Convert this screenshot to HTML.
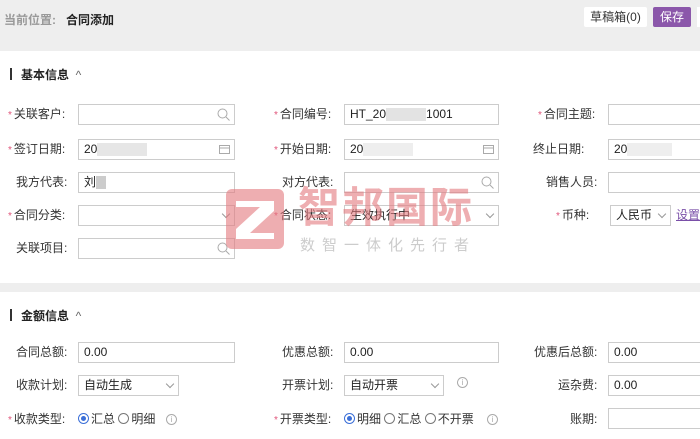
<!DOCTYPE html>
<html><head><meta charset="utf-8"><style>
*{margin:0;padding:0;box-sizing:border-box}
body{width:700px;height:439px;overflow:hidden;background:#fff;font-family:"Liberation Sans","Noto Sans CJK SC",sans-serif;font-size:12px;color:#333;position:relative}
.a{position:absolute}
.hdr{left:0;top:0;width:700px;height:51px;background:#eeeeee}
.lbl{position:absolute;font-size:12px;color:#333;text-align:right;line-height:20px}
.req::before{content:"*";color:#e0557a;margin-right:2px;font-size:10px}
.in{position:absolute;height:21px;border:1px solid #ccc;background:#fff;font-size:12px;line-height:19px;padding-left:5px;color:#222}
.blur{display:inline-block;background:#e3e3e3;height:13px;vertical-align:middle}
.sec{position:absolute;left:10px;font-weight:bold;font-size:12px;color:#222}
.sec b{display:inline-block;width:2px;height:12px;background:#333;vertical-align:-1px;margin-right:9px}
.chev{position:absolute;right:5px;top:5px;width:6px;height:6px;border-right:1px solid #999;border-bottom:1px solid #999;transform:rotate(45deg);}
.radio{display:inline-block;width:11px;height:11px;border:1px solid #777;border-radius:50%;vertical-align:-1px;margin-right:2px;position:relative}
.radio.on{border-color:#3b6fd8}
.radio.on::after{content:"";position:absolute;left:2px;top:2px;width:5px;height:5px;border-radius:50%;background:#3b6fd8}
.info{position:absolute;width:11px;height:11px;border:1px solid #aaa;border-radius:50%;font-size:8px;color:#aaa;text-align:center;line-height:9px}
</style></head><body>
<div class="a hdr"></div>
<div class="a" style="left:4px;top:11px;font-size:12px;color:#999;font-weight:bold">当前位置:</div>
<div class="a" style="left:66px;top:11px;font-size:12px;color:#222;font-weight:bold">合同添加</div>
<div class="a" style="left:584px;top:7px;width:63px;height:20px;background:#fff;border-radius:2px;text-align:center;line-height:20px;font-size:12px">草稿箱(0)</div>
<div class="a" style="left:653px;top:7px;width:38px;height:20px;background:#8b57aa;border-radius:2px;text-align:center;line-height:20px;font-size:12px;color:#fff">保存</div>
<div class="a" style="left:697px;top:7px;width:3px;height:20px;background:#fff"></div>

<div class="sec" style="top:66px"><b></b>基本信息 &nbsp;<span style="font-weight:normal;color:#666">^</span></div>

<div class="lbl req" style="left:8px;top:104px">关联客户:</div>
<div class="in" style="left:78px;top:104px;width:157px"><svg class="a" style="right:4px;top:3px" width="13" height="13"><circle cx="5.5" cy="5.5" r="4.5" fill="none" stroke="#aaa"/><path d="M9 9l3.5 3.5" stroke="#aaa"/></svg></div>
<div class="lbl req" style="left:274px;top:104px">合同编号:</div>
<div class="in" style="left:344px;top:104px;width:155px">HT_20<span class="blur" style="width:40px"></span>1001</div>
<div class="lbl req" style="left:538px;top:104px">合同主题:</div>
<div class="in" style="left:608px;top:104px;width:100px"></div>

<div class="lbl req" style="left:8px;top:139px">签订日期:</div>
<div class="in" style="left:78px;top:139px;width:157px">20<span class="blur" style="width:50px;background:#e6e6e6"></span><svg class="a" style="right:4px;top:4px" width="11" height="10"><rect x="0.5" y="1.5" width="10" height="8" fill="none" stroke="#aaa"/><path d="M0.5 4h10" stroke="#aaa"/></svg></div>
<div class="lbl req" style="left:274px;top:139px">开始日期:</div>
<div class="in" style="left:344px;top:139px;width:155px">20<span class="blur" style="width:50px;background:#eee"></span><svg class="a" style="right:4px;top:4px" width="11" height="10"><rect x="0.5" y="1.5" width="10" height="8" fill="none" stroke="#aaa"/><path d="M0.5 4h10" stroke="#aaa"/></svg></div>
<div class="lbl" style="left:533px;top:139px">终止日期:</div>
<div class="in" style="left:608px;top:139px;width:100px">20<span class="blur" style="width:45px;background:#eee"></span></div>

<div class="lbl" style="left:16px;top:172px">我方代表:</div>
<div class="in" style="left:78px;top:172px;width:157px">刘<span class="blur" style="width:10px;background:#ccc"></span></div>
<div class="lbl" style="left:282px;top:172px">对方代表:</div>
<div class="in" style="left:344px;top:172px;width:155px"><svg class="a" style="right:4px;top:3px" width="13" height="13"><circle cx="5.5" cy="5.5" r="4.5" fill="none" stroke="#aaa"/><path d="M9 9l3.5 3.5" stroke="#aaa"/></svg></div>
<div class="lbl" style="left:546px;top:172px">销售人员:</div>
<div class="in" style="left:608px;top:172px;width:100px"></div>

<div class="lbl req" style="left:8px;top:205px">合同分类:</div>
<div class="in" style="left:78px;top:205px;width:157px"><span class="chev"></span></div>
<div class="lbl req" style="left:274px;top:205px">合同状态:</div>
<div class="in" style="left:344px;top:205px;width:155px">生效执行中<span class="chev"></span></div>
<div class="lbl req" style="left:556px;top:205px">币种:</div>
<div class="in" style="left:610px;top:205px;width:61px">人民币<span class="chev"></span></div>
<div class="lbl" style="left:676px;top:205px;color:#7a4fa8;text-decoration:underline">设置</div>

<div class="lbl" style="left:16px;top:238px">关联项目:</div>
<div class="in" style="left:78px;top:238px;width:157px"><svg class="a" style="right:4px;top:3px" width="13" height="13"><circle cx="5.5" cy="5.5" r="4.5" fill="none" stroke="#aaa"/><path d="M9 9l3.5 3.5" stroke="#aaa"/></svg></div>

<div class="a" style="left:226px;top:189px;width:58px;height:60px;background:rgba(226,120,125,.6);border-radius:6px"></div>
<svg class="a" style="left:226px;top:189px" width="58" height="60"><path d="M10 12h38v10L24 44h24v6H10V40l24-22H10z" fill="#fff"/></svg>
<div class="a" style="left:298px;top:183px;font-size:42px;font-weight:bold;color:rgba(226,120,125,.6);letter-spacing:2px;line-height:50px">智邦国际</div>
<div class="a" style="left:300px;top:234px;font-size:15px;color:rgba(170,170,170,.6);letter-spacing:7px">数智一体化先行者</div>

<div class="a" style="left:0;top:283px;width:700px;height:9px;background:#eeeeee"></div>
<div class="sec" style="top:307px"><b></b>金额信息 &nbsp;<span style="font-weight:normal;color:#666">^</span></div>

<div class="lbl" style="left:16px;top:342px">合同总额:</div>
<div class="in" style="left:78px;top:342px;width:157px">0.00</div>
<div class="lbl" style="left:282px;top:342px">优惠总额:</div>
<div class="in" style="left:344px;top:342px;width:155px">0.00</div>
<div class="lbl" style="left:534px;top:342px">优惠后总额:</div>
<div class="in" style="left:608px;top:342px;width:100px">0.00</div>

<div class="lbl" style="left:16px;top:375px">收款计划:</div>
<div class="in" style="left:78px;top:375px;width:101px">自动生成<span class="chev"></span></div>
<div class="lbl" style="left:282px;top:375px">开票计划:</div>
<div class="in" style="left:344px;top:375px;width:100px">自动开票<span class="chev"></span></div>
<div class="info" style="left:457px;top:377px">i</div>
<div class="lbl" style="left:558px;top:375px">运杂费:</div>
<div class="in" style="left:608px;top:375px;width:100px">0.00</div>

<div class="lbl req" style="left:8px;top:409px">收款类型:</div>
<div class="lbl" style="left:78px;top:409px"><span class="radio on"></span>汇总 <span class="radio"></span>明细</div>
<div class="info" style="left:166px;top:414px">i</div>
<div class="lbl req" style="left:274px;top:409px">开票类型:</div>
<div class="lbl" style="left:344px;top:409px"><span class="radio on"></span>明细 <span class="radio"></span>汇总 <span class="radio"></span>不开票</div>
<div class="info" style="left:487px;top:414px">i</div>
<div class="lbl" style="left:570px;top:409px">账期:</div>
<div class="in" style="left:608px;top:408px;width:100px"></div>
</body></html>
